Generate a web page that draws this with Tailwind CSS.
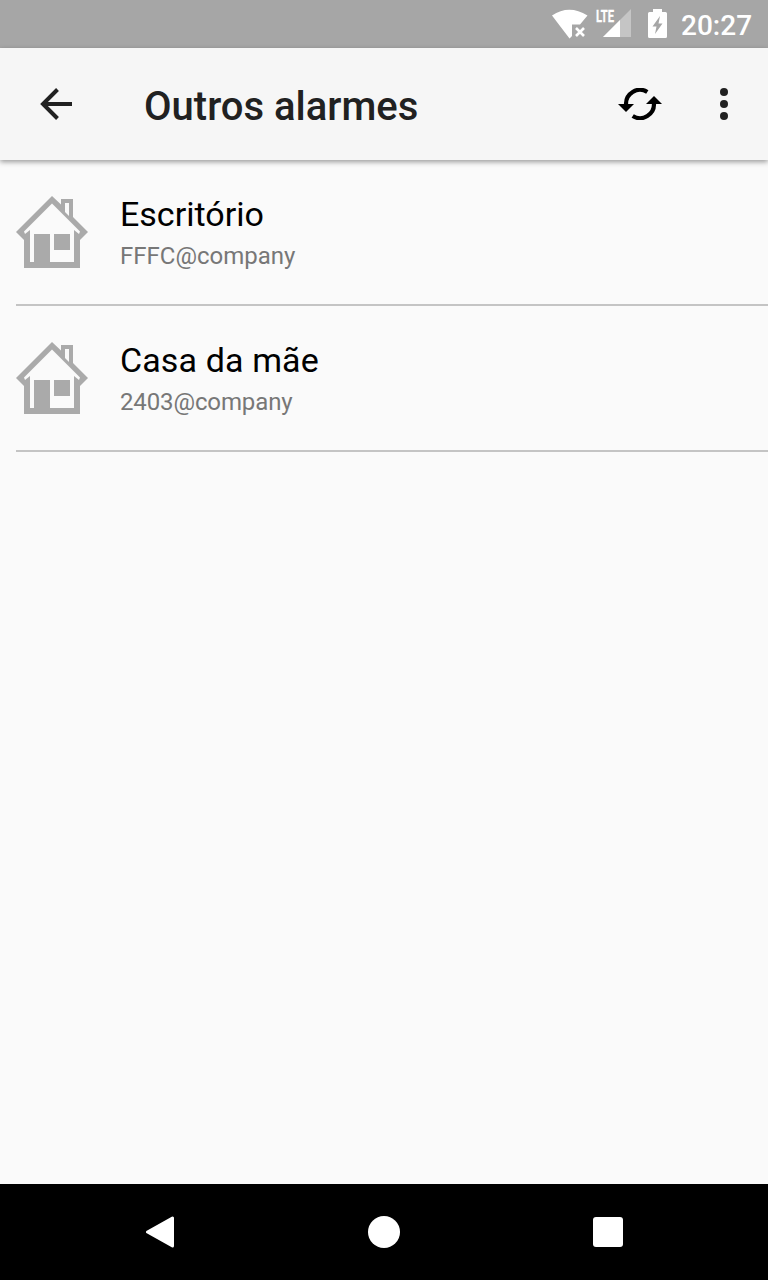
<!DOCTYPE html>
<html lang="pt">
<head>
<meta charset="utf-8">
<title>Outros alarmes</title>
<script src="https://cdn.jsdelivr.net/npm/@tailwindcss/browser@4"></script>
</head>
<body class="w-[768px] h-[1280px] flex flex-col bg-[#fafafa] font-[Roboto,sans-serif] overflow-hidden">
<svg class="hidden">
  <symbol id="house" viewBox="0 0 72 72">
    <path fill="#aaa" fill-rule="evenodd" d="M36 0L45 8.5V3H57V21L72 36L64 44V72H8V44L0 36ZM36 7.5L8 35.5L9 38L14 34V66H18V38H34V66H58V34L63 38L64 35.5ZM49 7V16L53 20V7ZM38 38H54V54H38Z"/>
  </symbol>
</svg>
<div class="h-12 shrink-0 bg-[#a6a6a6] flex items-start text-white">
  <svg class="w-[136px] h-12 ml-[540px] shrink-0" viewBox="540 0 136 48" fill="#fff">
    <path d="M552 15.5Q569 4 587.500 15.500L580 24.500H572V36L569.500 38.500Z"/>
    <path d="M576 28L584 36M584 28L576 36" stroke="#fff" stroke-width="2.600"/>
    <path d="M631 9V37H603Z" fill-opacity=".35"/>
    <path d="M620 20V37H603Z"/>
    <text x="596" y="21.500" font-size="16.500" font-weight="700" stroke="#fff" stroke-width=".3" textLength="18" lengthAdjust="spacingAndGlyphs">LTE</text>
    <path fill-rule="evenodd" d="M653 9H662V12H665.500Q667 12 667 13.500V36.500Q667 38 665.500 38H649.500Q648 38 648 36.500V13.500Q648 12 649.500 12H653ZM660 16L652.500 26.500H656.500L655 34L662.500 23.500H658.500Z"/>
  </svg>
  <span class="ml-[5px] mt-[10px] text-[28px] leading-8 font-medium">20:27</span>
</div>
<header class="h-28 shrink-0 bg-[#f6f6f6] flex items-center shadow-[0_2px_5px_rgba(0,0,0,0.38)] z-10">
  <svg class="w-8 h-8 ml-10 shrink-0" viewBox="0 0 32 32" fill="none" stroke="#212121" stroke-width="4"><path d="M32 16H4M17.500 1.500L3 16L17.500 30.500"/></svg>
  <h1 class="ml-[72px] mt-1.5 text-[40px] leading-[48px] font-medium text-[#212121] whitespace-nowrap">Outros alarmes</h1>
  <svg class="w-[44px] h-8 ml-auto shrink-0" viewBox="618 88 44 32">
    <g fill="none" stroke="#000" stroke-width="4.200"><path d="M647.300 92A13.900 13.900 0 0 0 626.100 105"/><path d="M632.700 116A13.900 13.900 0 0 0 653.900 103"/></g>
    <path d="M618 104H634L626 112ZM646 104H662L654 96Z"/>
  </svg>
  <svg class="w-2 h-8 ml-[58px] mr-10 shrink-0" viewBox="0 0 8 32" fill="#212121"><circle cx="4" cy="4" r="4"/><circle cx="4" cy="16" r="4"/><circle cx="4" cy="28" r="4"/></svg>
</header>
<main class="flex-1 pl-4">
  <div class="h-[146px] border-b-2 border-[#c4c4c4] flex items-center">
    <svg class="w-[72px] h-[72px] shrink-0"><use href="#house"/></svg>
    <div class="ml-8 pt-1">
      <div class="text-[34px] leading-[42px] text-black">Escritório</div>
      <div class="text-[24px] leading-[38px] text-[#777] pt-0.5">FFFC@company</div>
    </div>
  </div>
  <div class="h-[146px] border-b-2 border-[#c4c4c4] flex items-center">
    <svg class="w-[72px] h-[72px] shrink-0"><use href="#house"/></svg>
    <div class="ml-8 pt-1">
      <div class="text-[34px] leading-[42px] tracking-[0.12px] text-black">Casa da mãe</div>
      <div class="text-[24px] leading-[38px] tracking-[-0.12px] text-[#777] pt-0.5">2403@company</div>
    </div>
  </div>
</main>
<nav class="h-24 shrink-0 bg-black flex items-center">
  <svg class="w-7 h-8 ml-[146px]" viewBox="0 0 28 32" fill="#fff" stroke="#fff" stroke-width="3" stroke-linejoin="round"><path d="M26.500 2V30L1.500 16Z"/></svg>
  <div class="size-8 rounded-full bg-white ml-[194px]"></div>
  <div class="size-[30px] rounded-[3px] bg-white ml-[193px]"></div>
</nav>
</body>
</html>
